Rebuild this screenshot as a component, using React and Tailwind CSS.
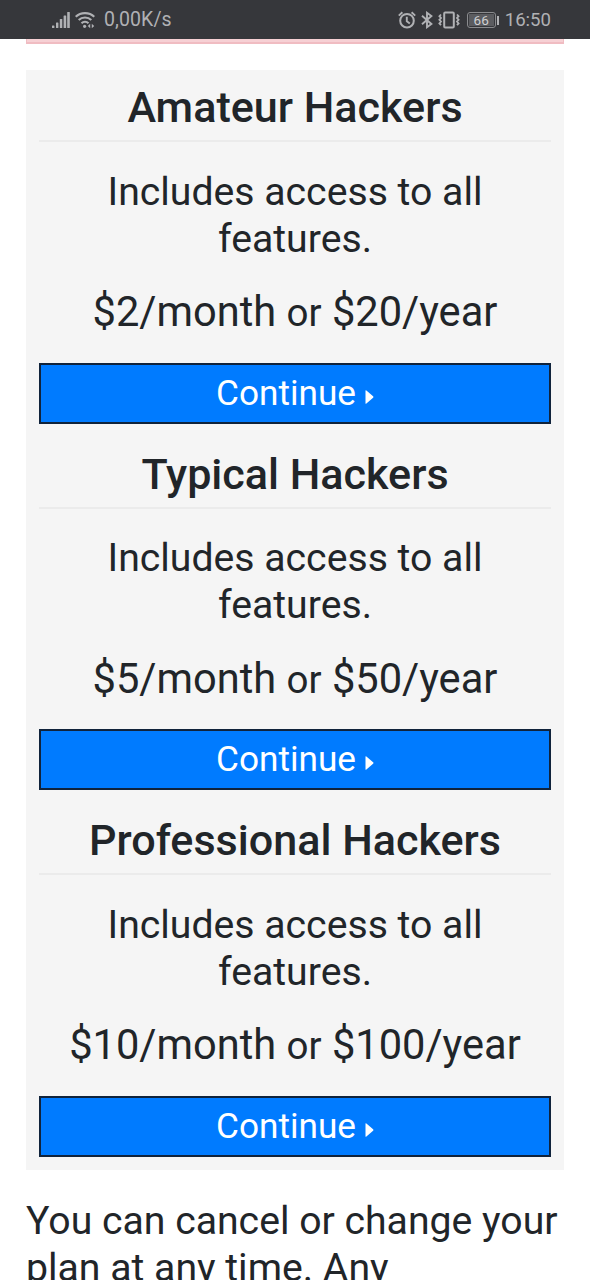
import React from 'react';

const plans = [
  { name: 'Amateur Hackers', monthly: '$2/month', yearly: '$20/year' },
  { name: 'Typical Hackers', monthly: '$5/month', yearly: '$50/year' },
  { name: 'Professional Hackers', monthly: '$10/month', yearly: '$100/year' },
];

const SignalIcon = () => (
  <svg width="18" height="18" viewBox="0 0 18 18" fill="#b0b1b4">
    <rect x="0" y="14.5" width="2.4" height="2.5" rx=".5" />
    <rect x="4" y="11.5" width="2.4" height="5.5" rx=".5" />
    <rect x="7.8" y="8" width="2.5" height="9" rx=".5" />
    <rect x="11.6" y="4.5" width="2.6" height="12.5" rx=".5" />
    <rect x="15.2" y="1" width="2.6" height="16" rx=".5" />
  </svg>
);

const WifiIcon = () => (
  <svg width="20" height="18" viewBox="0 0 20 18" fill="none" stroke="#b0b1b4" strokeWidth="2.1">
    <path d="M.7 5.8C5.6.9 14.4.9 19.3 5.8" />
    <path d="M3.7 9.1c3.4-3.4 9.2-3.4 12.6 0" />
    <path d="M6.5 12.3c2-2 5-2 7 0" />
    <circle cx="9.6" cy="15.3" r="1.6" fill="#b0b1b4" stroke="none" />
    <path d="M15.2 12.8v4.4L12.8 15zM16.8 12.8v4.4l2.4-2.2z" fill="#b0b1b4" stroke="none" />
  </svg>
);

const AlarmIcon = () => (
  <svg width="18" height="18" viewBox="0 0 18 18" fill="none" stroke="#b0b1b4" strokeWidth="2">
    <circle cx="9" cy="9.7" r="6.8" />
    <path d="M8.8 5.7v4.5l3 2.2M.8 4.6 4.4 1.3M17.2 4.6l-3.6-3.3" strokeWidth="1.9" />
  </svg>
);

const BluetoothIcon = () => (
  <svg width="12" height="18" viewBox="0 0 12 18" fill="none" stroke="#b0b1b4" strokeWidth="1.9">
    <path d="m1 4.8 9.4 8.2L6 16.2V1.8L10.4 5 1 13.2" />
  </svg>
);

const VibrateIcon = () => (
  <svg width="22" height="18" viewBox="0 0 22 18" fill="none" stroke="#b0b1b4" strokeWidth="2">
    <rect x="6.2" y="1.6" width="9.6" height="14.8" rx="1" />
    <path d="M3 3.5 1.4 5.2 3 7 1.4 8.8 3 10.6l-1.6 1.8L3 14.2M19 3.5l1.6 1.7L19 7l1.6 1.8-1.6 1.8 1.6 1.8-1.6 1.8" strokeWidth="1.8" />
  </svg>
);

const StatusBar = () => (
  <header className="flex h-[39px] items-center bg-[#36373b] pt-px pr-[39px] pl-[52px] text-[#b0b1b4]">
    <SignalIcon />
    <div className="ml-[5px]"><WifiIcon /></div>
    <span className="ml-[9px] text-[19.5px] leading-[38px] tracking-[0.1px]">0,00K/s</span>
    <div className="ml-auto flex items-center">
      <AlarmIcon />
      <div className="ml-[5px]"><BluetoothIcon /></div>
      <div className="ml-[5px]"><VibrateIcon /></div>
      <div className="ml-[7px] flex h-[16px] w-[29px] items-center rounded-[3px] border border-[#8a8b8e] p-px">
        <span className="flex h-full w-[20px] flex-1 items-center justify-center bg-[#5b5c60] text-[13.5px] leading-[12px] text-[#d0d0d2]">66</span>
      </div>
      <div className="ml-[1px] h-[9px] w-[2px] bg-[#b0b1b4]" />
      <span className="ml-[6px] text-[18.6px] leading-[38px]">16:50</span>
    </div>
  </header>
);

const Plan = ({ name, monthly, yearly }) => (
  <section className="h-[366.7px] text-center">
    <h2 className="h-[72px] border-b-2 border-[#ebebeb] pt-[12px] text-[43.1px] leading-[52px] font-medium whitespace-nowrap">{name}</h2>
    <p className="pt-[26.5px] text-[39.2px] leading-[47px]">Includes access to all<br />features.</p>
    <p className="pt-[20.5px] text-[41.6px] leading-[58px] whitespace-nowrap">
      {monthly} <span className="text-[38.5px]">or</span> {yearly}
    </p>
    <button className="mt-[20.7px] flex h-[61px] w-full items-center justify-center border-2 border-[#10233b] bg-[#007bff] text-[35.2px] text-white">
      Continue
      <svg className="mt-[7px] ml-[9px]" width="9" height="16" viewBox="0 0 9 16" fill="currentColor">
        <path d="M.5 1.8q0-1 .9-.2l6.7 5.7q.8.7 0 1.4l-6.7 5.7q-.9.8-.9-.2z" />
      </svg>
    </button>
  </section>
);

const App = () => (
  <div className="h-[1280px] overflow-hidden bg-white font-[Roboto,sans-serif] text-[#212529]">
    <StatusBar />
    <main className="px-[26px]">
      <div className="h-[5px] border-x border-b-2 border-[#f0bcc2] bg-[#f6d0d4]" />
      <div className="mt-[26px] h-[1100px] bg-[#f5f5f5] px-[13px]">
        {plans.map((p) => <Plan key={p.name} {...p} />)}
      </div>
      <p className="pt-[27.5px] text-[39.2px] leading-[47px] whitespace-nowrap">You can cancel or change your<br />plan at any time. Any</p>
    </main>
  </div>
);

export default App;
